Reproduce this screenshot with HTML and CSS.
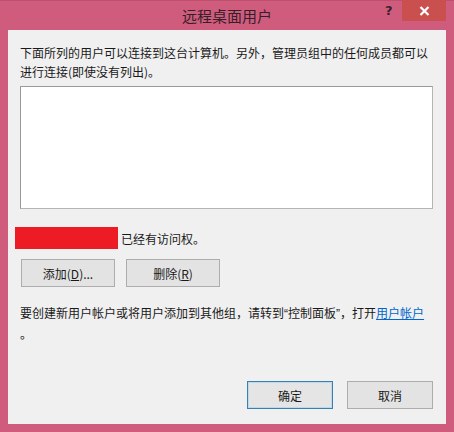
FILE: index.html
```html
<!DOCTYPE html>
<html lang="zh-CN">
<head>
<meta charset="utf-8">
<title>远程桌面用户</title>
<link rel="stylesheet" href="styles.css">
</head>
<body>
<div class="window">
  <div class="titlebar">
    <div class="title">远程桌面用户</div>
    <div class="help">?</div>
    <div class="close">
      <svg width="11" height="10" viewBox="0 0 11 10"><path d="M1.5 1 L9.5 9 M9.5 1 L1.5 9" stroke="#fff" stroke-width="2.2" fill="none"/></svg>
    </div>
  </div>
  <div class="content">
    <p class="intro">下面所列的用户可以连接到这台计算机。另外，管理员组中的任何成员都可以进行连接(即使没有列出)。</p>
    <div class="listbox"></div>
    <div class="access">
      <span class="redact"></span>
      <span>已经有访问权。</span>
    </div>
    <div class="btnrow">
      <button class="btn">添加(<u>D</u>)...</button>
      <button class="btn">删除(<u>R</u>)</button>
    </div>
    <p class="note">要创建新用户帐户或将用户添加到其他组，请转到<span class="q">“</span>控制面板<span class="q">”</span>，打开<a class="link">用户帐户</a><br>。</p>
    <div class="spacer"></div>
    <div class="footer">
      <button class="btn dlg default">确定</button>
      <button class="btn dlg">取消</button>
    </div>
  </div>
</div>
</body>
</html>
```
FILE: styles.css
```css
* { box-sizing: border-box; }
html, body { margin: 0; padding: 0; }
body {
  width: 454px;
  height: 432px;
  overflow: hidden;
  background: #cf5c7d;
  font-family: "Noto Sans CJK SC", "Microsoft YaHei", sans-serif;
  font-size: 12px;
  color: #1a1a1a;
}
.window {
  width: 454px;
  height: 432px;
  display: flex;
  flex-direction: column;
  background: #cf5c7d;
  border-top: 1px solid #bf4f70;
}
.titlebar {
  position: relative;
  height: 29px;
  flex: none;
}
.title {
  text-align: center;
  font-size: 15px;
  line-height: 29px;
  color: #35202a;
}
.help {
  position: absolute;
  left: 385px;
  top: 2px;
  font-family: "DejaVu Sans", sans-serif;
  font-weight: bold;
  font-size: 13px;
  color: #3a2030;
}
.close {
  position: absolute;
  left: 402px;
  top: -1px;
  width: 44px;
  height: 21px;
  background: #c9504f;
  display: flex;
  align-items: center;
  justify-content: center;
}
.content {
  flex: 1;
  margin: 0 8px 8px 8px;
  background: #f0f0f0;
  display: flex;
  flex-direction: column;
  padding: 13px 13px 15px 12px;
}
.intro {
  margin: 0;
  line-height: 19px;
  width: 412px;
}
.listbox {
  margin-top: 5px;
  width: 413px;
  height: 123px;
  background: #fff;
  border: 1px solid #9a9a9a;
  border-color: #9a9a9a #b5b5b5 #b5b5b5 #9a9a9a;
}
.access {
  margin-top: 18px;
  margin-left: -5px;
  display: flex;
  align-items: center;
  gap: 3px;
  height: 22px;
}
.redact {
  display: block;
  width: 103px;
  height: 22px;
  background: #ed1c24;
}
.btnrow {
  margin-top: 10px;
  margin-left: 1px;
  display: flex;
  gap: 11px;
}
.btn {
  font-family: inherit;
  font-size: 12px;
  color: #1a1a1a;
  width: 94px;
  height: 28px;
  padding: 0;
  background: #e3e3e3;
  border: 1px solid #adadad;
  border-radius: 0;
}
.btn u { text-decoration: underline; }
.note {
  margin: 16px 0 0 0;
  line-height: 19px;
  white-space: nowrap;
}
.q {
  font-family: "Liberation Sans", sans-serif;
}
.link {
  color: #0066cc;
  text-decoration: underline;
}
.spacer { flex: 1; }
.footer {
  display: flex;
  justify-content: flex-end;
  gap: 14px;
}
.dlg { width: 86px; }
.default {
  border: 1px solid #3c7fb1;
  box-shadow: inset 0 0 0 1px #bcd9ee;
  background: #e5e5e5;
}
```
